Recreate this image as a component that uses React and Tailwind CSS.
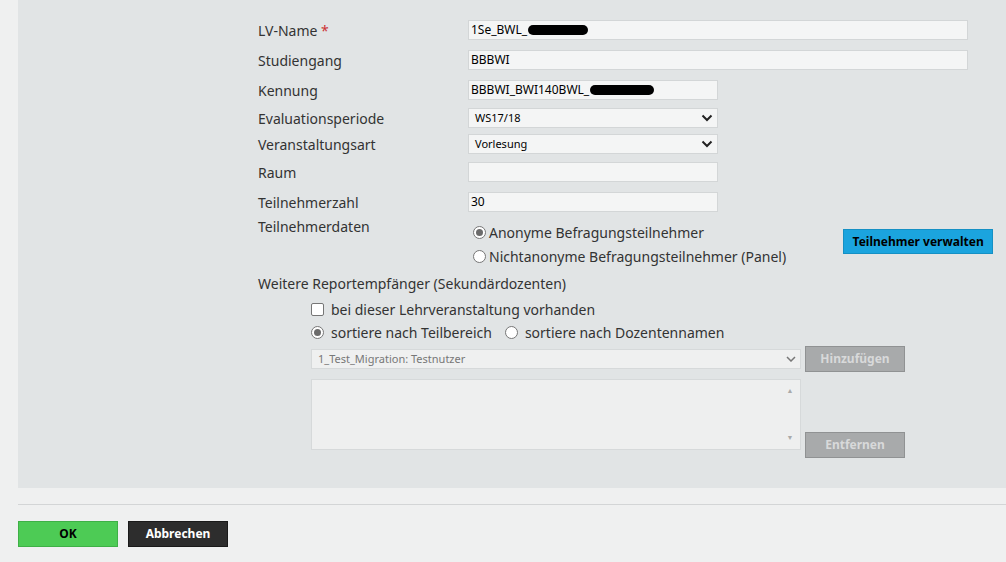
import React from "react";

const Chev = () => (
  <svg width="12" height="8" viewBox="0 0 12 8" className="mr-1"><path d="M1.5 1.5 L6 6 L10.5 1.5" stroke="#222" strokeWidth="2" fill="none" /></svg>
);
const Blob = ({ w }) => <span className="inline-block h-[10px] bg-black rounded-full ml-[1px]" style={{ width: w }} />;

function Row({ label, h, children, labelCls = "" }) {
  return (
    <div className="flex items-center" style={{ height: h }}>
      <div className={"w-[210px] text-[14px] text-[#333] " + labelCls}>{label}</div>
      {children}
    </div>
  );
}
const Inp = ({ w, children }) => (
  <div className={"h-[20px] bg-[#f4f5f5] border border-[#d3d6d7] flex items-center px-[2px] text-[12px] text-black " + w}>{children}</div>
);
const Sel = ({ children }) => (
  <div className="h-[20px] w-[250px] bg-[#f4f5f5] border border-[#d3d6d7] flex items-center justify-between pl-[6px] text-[11px] text-black">{children}<Chev /></div>
);
const Radio = ({ on }) => (
  <span className="w-[13px] h-[13px] rounded-full border border-[#767676] bg-white flex items-center justify-center">
    {on && <span className="w-[7px] h-[7px] rounded-full bg-[#6b6b6b]" />}
  </span>
);

export default function App() {
  return (
    <div className="w-[1006px] h-[562px] bg-[#eff0f0] font-['Liberation_Sans',Arial,sans-serif] overflow-hidden">
      <div className="ml-[18px] h-[488px] bg-[#e1e4e5] pl-[240px] pt-[20px]">
        <Row label={<>LV-Name <span className="text-[#c33]">*</span></>} h={20}>
          <Inp w="w-[500px]">1Se_BWL_<Blob w={60} /></Inp>
        </Row>
        <div className="h-[10px]" />
        <Row label="Studiengang" h={20}><Inp w="w-[500px]">BBBWI</Inp></Row>
        <div className="h-[10px]" />
        <Row label="Kennung" h={20}><Inp w="w-[250px]">BBBWI_BWI140BWL_<Blob w={64} /></Inp></Row>
        <div className="h-[8px]" />
        <Row label="Evaluationsperiode" h={20}><Sel>WS17/18</Sel></Row>
        <div className="h-[6px]" />
        <Row label="Veranstaltungsart" h={20}><Sel>Vorlesung</Sel></Row>
        <div className="h-[8px]" />
        <Row label="Raum" h={20}><Inp w="w-[250px]"></Inp></Row>
        <div className="h-[10px]" />
        <Row label="Teilnehmerzahl" h={20}><Inp w="w-[250px]">30</Inp></Row>
        <div className="flex mt-[6px]">
          <div className="w-[210px] text-[14px] text-[#333] leading-[18px]">Teilnehmerdaten</div>
          <div className="flex flex-col gap-[6px] pt-[5px] pl-[5px] text-[14px] text-[#333]">
            <div className="flex items-center gap-[3px] h-[18px]"><Radio on />Anonyme Befragungsteilnehmer</div>
            <div className="flex items-center gap-[3px] h-[18px]"><Radio />Nichtanonyme Befragungsteilnehmer (Panel)</div>
          </div>
          <div className="ml-[57px] mt-[11px] w-[150px] h-[25px] bg-[#1ba4de] border border-[#1590c4] text-[12px] font-bold text-black flex items-center justify-center">Teilnehmer verwalten</div>
        </div>
        <div className="text-[14px] text-[#333] mt-[8px] h-[18px]">Weitere Reportempfänger (Sekundärdozenten)</div>
        <div className="pl-[53px] text-[14px] text-[#333]">
          <div className="flex items-center gap-[7px] h-[18px] mt-[9px]"><span className="w-[13px] h-[13px] border border-[#767676] rounded-[2px] bg-white" />bei dieser Lehrveranstaltung vorhanden</div>
          <div className="flex items-center h-[18px] mt-[5px]">
            <span className="flex items-center gap-[7px]"><Radio on />sortiere nach Teilbereich</span>
            <span className="flex items-center gap-[7px] ml-[13px]"><Radio />sortiere nach Dozentennamen</span>
          </div>
          <div className="flex items-center mt-[5px] gap-[4px]">
            <div className="w-[490px] h-[20px] bg-[#eff0f0] border border-[#d6d9da] flex items-center justify-between pl-[6px] text-[11px] text-[#777]">
              1_Test_Migration: Testnutzer
              <svg width="10" height="6" viewBox="0 0 10 6" className="mr-[4px]"><path d="M1 1 L5 5 L9 1" stroke="#777" strokeWidth="1.5" fill="none" /></svg>
            </div>
            <div className="w-[100px] h-[26px] bg-[#a8aaab] border border-[#909293] text-[12px] font-bold text-[#d8d9da] flex items-center justify-center">Hinzufügen</div>
          </div>
          <div className="flex items-end mt-[7px] gap-[4px]">
            <div className="w-[490px] h-[71px] bg-[#eeefef] border border-[#d6d9da] flex justify-end">
              <div className="w-[20px] flex flex-col items-center justify-between py-[6px] text-[7px] text-[#aaa]"><span>▲</span><span>▼</span></div>
            </div>
            <div className="w-[100px] h-[26px] bg-[#a8aaab] border border-[#909293] text-[12px] font-bold text-[#d8d9da] flex items-center justify-center mb-[-8px]">Entfernen</div>
          </div>
        </div>
      </div>
      <div className="ml-[18px] mt-[16px] border-t border-[#d3d5d6]" />
      <div className="flex ml-[18px] mt-[16px] gap-[10px]">
        <div className="w-[100px] h-[26px] bg-[#4dcb55] border border-[#3eb046] text-[12px] font-bold text-black flex items-center justify-center">OK</div>
        <div className="w-[100px] h-[26px] bg-[#2d2d2d] border border-[#1a1a1a] text-[12px] font-bold text-white flex items-center justify-center">Abbrechen</div>
      </div>
    </div>
  );
}
